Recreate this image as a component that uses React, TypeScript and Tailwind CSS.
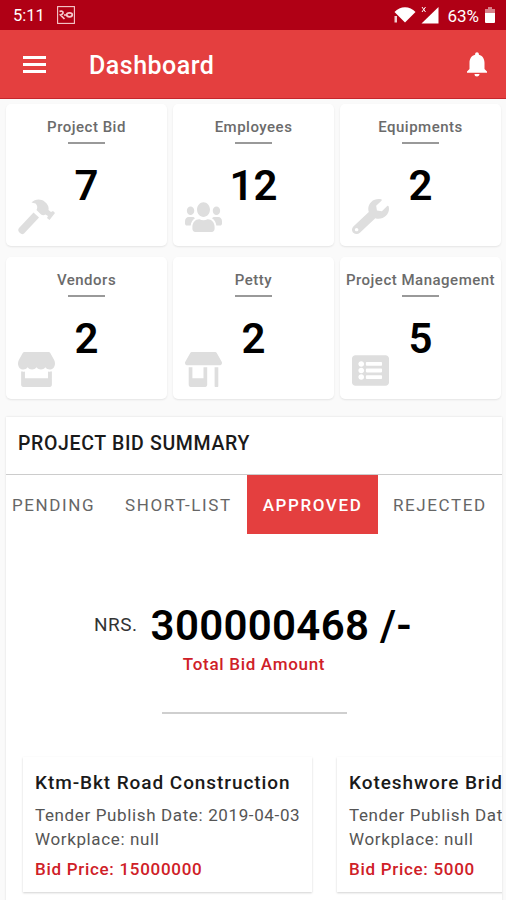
import type { ComponentType, SVGProps } from "react";
import { FaListAlt, FaStore, FaStoreAlt, FaUsers, FaWrench } from "react-icons/fa";
import { MdNotifications } from "react-icons/md";

type Stat = {
  label: string;
  value: number;
  icon: ComponentType<SVGProps<SVGSVGElement>>;
  iconClass: string;
};

function Hammer(props: SVGProps<SVGSVGElement>) {
  return (
    <svg viewBox="0 0 37 37" fill="currentColor" {...props}>
      <path d="M15.500 13.500L21 18.500L6 34.500Q4 36 2 34L1 33Q-0.500 31 1 29Z" />
      <path d="M13.500 3.500C17 0 23 -0.500 27 3C30 5.500 31 8 30.500 11L33 13L35 12L37 14L31.500 21L29 19L30 17L27.500 15.500C25 17 23.500 16 22 14.500L18.500 11C20 8 19 6 17.500 4.500Z" />
    </svg>
  );
}

const stats: Stat[] = [
  { label: "Project Bid", value: 7, icon: Hammer, iconClass: "h-[37px]" },
  { label: "Employees", value: 12, icon: FaUsers, iconClass: "h-[34px] -mt-[2px]" },
  { label: "Equipments", value: 2, icon: FaWrench, iconClass: "h-[35px] -mt-[2px]" },
  { label: "Vendors", value: 2, icon: FaStore, iconClass: "h-[35px] -mt-[2px]" },
  { label: "Petty", value: 2, icon: FaStoreAlt, iconClass: "h-[35px] -mt-[2px]" },
  { label: "Project Management", value: 5, icon: FaListAlt, iconClass: "h-[35px] -mt-[1px]" },
];

const bids = [
  { title: "Ktm-Bkt Road Construction", date: "2019-04-03", workplace: "null", price: 15000000 },
  { title: "Koteshwore Bridge", date: "2019-04-03", workplace: "null", price: 5000 },
];

function StatusBar() {
  return (
    <div className="flex h-[30px] items-center bg-[#b00015] pl-[13px] pr-[11px] text-white">
      <span className="w-[33px] pt-[2px] text-[16.5px] leading-none">5:11</span>
      <svg className="ml-[11px] h-[18px] w-[18px]" viewBox="0 0 18 18" fill="none" stroke="#f6c9cd">
        <rect x="0.6" y="0.6" width="16.8" height="16.8" strokeWidth="1.1" />
        <path d="M2.5 5.5c4-1.500 5 2.500 1 3.500l4 4M7 9h2" strokeWidth="1.700" />
        <ellipse cx="12.500" cy="8.800" rx="2.800" ry="2" strokeWidth="1.700" />
      </svg>
      <div className="ml-auto flex items-center">
        <svg className="h-[18px] w-[22px]" viewBox="0 0 22 18" fill="#fff">
          <path d="M0.500 6C6-0.500 16-0.500 21.500 6L11 16.500Z" />
          <path d="M0.500 10h2.500v6.500h-2.500z" opacity="0.8" />
        </svg>
        <svg className="ml-[5px] h-[18px] w-[18px]" viewBox="0 0 18 18" fill="#fff">
          <path d="M17.500 1v16.500h-17z" />
          <path d="M1 1l3.500 5M4.500 1l-3.500 5" stroke="#fff" strokeWidth="1" />
        </svg>
        <span className="ml-[8px] pt-[2px] text-[17px] leading-none">63%</span>
        <svg className="ml-[6px] h-[16px] w-[10px]" viewBox="0 0 10 16">
          <path d="M3 0h4v2h3v4H0V2h3z" fill="#d9808a" />
          <path d="M0 6h10v9q0 1-1 1H1q-1 0-1-1z" fill="#fff" />
        </svg>
      </div>
    </div>
  );
}

function Header() {
  return (
    <header className="flex h-[69px] items-center border-b border-[#c5262c] bg-[#e43f3f] pl-[23px] pr-[14px] text-white">
      <div className="flex w-[23px] flex-col gap-[4px]">
        <span className="h-[3px] bg-white" />
        <span className="h-[3px] bg-white" />
        <span className="h-[3px] bg-white" />
      </div>
      <h1 className="ml-[43px] pt-[3px] text-[25px] font-medium tracking-[0.5px]">Dashboard</h1>
      <MdNotifications className="ml-auto h-[30px] w-[30px]" />
    </header>
  );
}

function StatCard({ label, value, icon: Icon, iconClass }: Stat) {
  return (
    <div className="relative flex h-[142px] flex-col items-center rounded-[5px] bg-white pt-[14px] shadow-[0_1px_2px_rgba(0,0,0,0.09)]">
      <p className="whitespace-nowrap text-[15px] font-medium leading-[18px] tracking-[0.5px] text-[#6b6b6b]">
        {label}
      </p>
      <div className="mt-[6px] h-[2px] w-[37px] bg-[#999]" />
      <p className="mt-[17px] text-[42px] font-semibold leading-[50px] text-black">{value}</p>
      <div className="absolute bottom-[10px] left-[12px] flex h-[37px] w-[37px] items-center justify-center">
        <Icon preserveAspectRatio="none" className={`w-[37px] shrink-0 text-[#dedede] ${iconClass}`} />
      </div>
    </div>
  );
}

function Tabs() {
  return (
    <div className="flex h-[59px] items-center text-[17px] tracking-[1.6px] text-[#666]">
      <span className="w-[112px] pl-[6px] pt-[2px]">PENDING</span>
      <span className="w-[129px] pl-[7px] pt-[2px]">SHORT-LIST</span>
      <span className="flex h-full w-[131px] items-center justify-center bg-[#e43f3f] pt-[2px] font-medium text-white">
        APPROVED
      </span>
      <span className="pl-[15px] pt-[2px]">REJECTED</span>
    </div>
  );
}

export default function App() {
  return (
    <div className="h-[900px] w-[506px] overflow-hidden bg-[#fafafa] font-['Roboto',sans-serif]">
      <StatusBar />
      <Header />

      <div className="grid grid-cols-[161px_161px_161px] gap-x-[6px] gap-y-[11px] pl-[6px] pt-[5px]">
        {stats.map((stat) => (
          <StatCard key={stat.label} {...stat} />
        ))}
      </div>

      <section className="ml-[6px] mt-[18px] h-[500px] w-[496px] overflow-hidden bg-white shadow-[0_0_2px_rgba(0,0,0,0.12)]">
        <h2 className="flex h-[58px] items-center border-b border-[#ccc] pl-[12px] pb-[4px] text-[19.5px] font-medium tracking-[0.65px] text-[#1a1a1a]">
          PROJECT BID SUMMARY
        </h2>
        <Tabs />

        <div className="mt-[66px] flex flex-col items-center">
          <p className="-ml-[2px] flex h-[50px] items-center leading-[50px]">
            <span className="text-[19px] tracking-[0.5px] text-[#333]">NRS.</span>
            <span className="ml-[13px] pt-[2px] text-[42px] font-semibold tracking-[0.3px] text-black">
              300000468 /-
            </span>
          </p>
          <p className="mt-[4px] text-[17px] font-medium leading-[20px] tracking-[0.7px] text-[#cf2027]">
            Total Bid Amount
          </p>
          <div className="mt-[38px] h-[2px] w-[185px] bg-[#cfcfcf]" />
        </div>

        <div className="mt-[43px] flex gap-[25px] pl-[17px]">
          {bids.map((bid) => (
            <div
              key={bid.title}
              className="h-[135px] w-[289px] shrink-0 whitespace-nowrap bg-white pl-[12px] pt-[14px] text-[17px] tracking-[0.63px] text-[#555] shadow-[0_1px_2px_rgba(0,0,0,0.18)]"
            >
              <h3 className="text-[19px] font-medium leading-[24px] tracking-[0.93px] text-[#1a1a1a]">{bid.title}</h3>
              <p className="mt-[8px] leading-[24px]">Tender Publish Date: {bid.date}</p>
              <p className="leading-[24px]">Workplace: {bid.workplace}</p>
              <p className="mt-[6px] font-medium leading-[24px] tracking-[0.7px] text-[#cf2027]">
                Bid Price: {bid.price}
              </p>
            </div>
          ))}
        </div>
      </section>
    </div>
  );
}
